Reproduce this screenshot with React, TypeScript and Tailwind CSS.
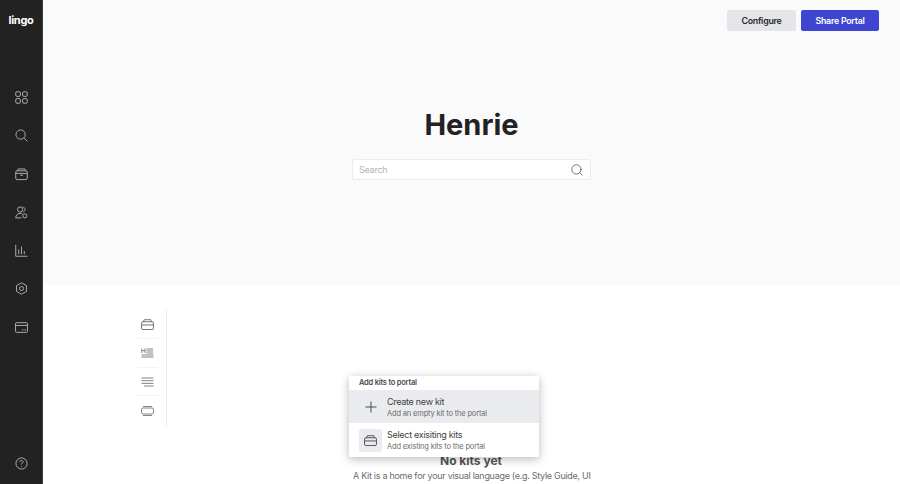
import { Search } from "lucide-react";

function NavIcon({ children }: { children: React.ReactNode }) {
  return (
    <svg viewBox="0 0 14 14" fill="none" stroke="#b4b4b4" strokeWidth="1" className="w-[13px] h-[13px] block">
      {children}
    </svg>
  );
}

function KitIcon({ className, color = "#4a4a4a" }: { className: string; color?: string }) {
  return (
    <svg viewBox="0 0 14 12" fill="none" stroke={color} strokeWidth="1" className={className}>
      <rect x="0.5" y="3" width="13" height="8.5" rx="1.5" />
      <path d="M2.5 3 L3.5 0.8 H10.5 L11.5 3 M0.5 6.5 H13.5" />
    </svg>
  );
}

const navTop = [
  <NavIcon key="grid">
    <rect x="0.8" y="0.8" width="5" height="5" rx="1.4" />
    <rect x="8.2" y="0.8" width="5" height="5" rx="1.4" />
    <rect x="0.8" y="8.2" width="5" height="5" rx="1.4" />
    <rect x="8.2" y="8.2" width="5" height="5" rx="1.4" />
  </NavIcon>,
  <NavIcon key="search">
    <circle cx="6" cy="6" r="5" />
    <path d="M9.7 9.7 L13.4 13.4" />
  </NavIcon>,
  <NavIcon key="kit">
    <rect x="0.8" y="3" width="12.4" height="9.5" rx="1.5" />
    <path d="M2.5 3 L3.4 1 H10.6 L11.5 3 M0.8 5.8 H13.2 M5.4 7.8 H8.6" />
  </NavIcon>,
  <NavIcon key="people">
    <circle cx="5.5" cy="3.8" r="2.8" />
    <path d="M0.8 12.8 C0.8 9.8 2.8 8 5.5 8 C6.5 8 7.3 8.2 8 8.7 M0.8 12.8 H7 M8.2 1.2 C9.8 1.2 10.8 2.4 10.8 3.8 C10.8 5 10 6 9 6.4" />
    <circle cx="10.6" cy="10.6" r="2.2" />
  </NavIcon>,
  <NavIcon key="chart">
    <path d="M0.8 0.8 V13.2 H13.4 M4 11 V6 M7 11 V2.8 M10 11 V7.5" />
  </NavIcon>,
  <NavIcon key="gear">
    <path d="M7 0.8 L12.4 3.9 V10.1 L7 13.2 L1.6 10.1 V3.9 Z" strokeLinejoin="round" />
    <circle cx="7" cy="7" r="2.2" />
  </NavIcon>,
  <NavIcon key="billing">
    <rect x="0.6" y="1.8" width="12.8" height="10.4" rx="1" />
    <path d="M0.6 4.8 H13.4 M7.4 9.5 H9 M10 9.5 H11.6" />
  </NavIcon>,
];

function Sidebar() {
  return (
    <aside className="w-[43px] h-full shrink-0 bg-[#222222] border-r border-[#3a3a3a] flex flex-col items-center">
      <div className="mt-[10px] h-[20px] text-white text-[11px] leading-[20px] font-bold tracking-[-0.3px]">lingo</div>
      <nav className="mt-[61px] flex flex-col gap-[25.3px]">{navTop}</nav>
      <div className="mt-auto mb-[14px]">
        <NavIcon>
          <circle cx="7" cy="7" r="6" />
          <path d="M5.3 5.5 C5.3 4.4 6.1 3.8 7 3.8 C8 3.8 8.7 4.4 8.7 5.3 C8.7 6.5 7 6.6 7 8" />
          <path d="M7 9.6 V10.4" />
        </NavIcon>
      </div>
    </aside>
  );
}

function Rail() {
  return (
    <div className="w-[30px] h-[116px] border-r border-[#eeeeee] pr-[8px] flex flex-col">
      <div className="h-[29px] flex items-center justify-center border-b border-[#f3f3f3]">
        <KitIcon className="w-[13px] h-[11px]" color="#666666" />
      </div>
      <div className="h-[29px] flex items-center justify-center border-b border-[#f3f3f3]">
        <svg viewBox="0 0 13 10" fill="none" stroke="#666666" strokeWidth="0.8" className="w-[13px] h-[10px]">
          <path d="M0.8 0.5 V5 M4 0.5 V5 M0.8 2.7 H4 M5.5 1 H12 M5.5 3 H12 M5.5 5 H12 M0.5 7 H12.5 M0.5 9 H12.5" />
        </svg>
      </div>
      <div className="h-[28px] flex items-center justify-center border-b border-[#f3f3f3]">
        <svg viewBox="0 0 13 10" fill="none" stroke="#666666" strokeWidth="0.8" className="w-[13px] h-[10px]">
          <path d="M0.5 1 H12.5 M0.5 3.7 H12.5 M0.5 6.4 H12.5 M3 9 H12.5" />
        </svg>
      </div>
      <div className="h-[29px] flex items-center justify-center">
        <svg viewBox="0 0 13 10" fill="none" stroke="#666666" strokeWidth="0.8" className="w-[13px] h-[10px]">
          <rect x="0.5" y="2" width="12" height="6" rx="1.5" />
          <path d="M2 0.5 H11 M2 9.5 H11" />
        </svg>
      </div>
    </div>
  );
}

function AddKitMenu() {
  return (
    <div className="absolute left-[306px] top-[91px] w-[190px] h-[81px] bg-white rounded-[2px] shadow-[0_2px_10px_rgba(0,0,0,0.28)] z-10">
      <div className="h-[14px] pl-[10px] pt-[1px] text-[7.5px] leading-[12px] font-semibold tracking-[-0.22px] text-[#4b4b4b]">Add kits to portal</div>
      <div className="h-[33px] bg-[#e9ebee] flex items-center pl-[10px]">
        <div className="w-[23px] h-[23px] flex items-center justify-center">
          <svg viewBox="0 0 12 12" fill="none" stroke="#4a4a4a" strokeWidth="1" className="w-[12px] h-[12px]">
            <path d="M6 0.5 V11.5 M0.5 6 H11.5" />
          </svg>
        </div>
        <div className="ml-[5px] pt-[1px]">
          <div className="text-[9px] leading-[12px] tracking-[-0.29px] text-[#3f3f3f]">Create new kit</div>
          <div className="text-[7.5px] leading-[11px] tracking-[-0.17px] text-[#6d6d6d]">Add an empty kit to the portal</div>
        </div>
      </div>
      <div className="h-[34px] flex items-center pl-[10px]">
        <div className="w-[23px] h-[23px] rounded-[2px] bg-[#e9ebee] flex items-center justify-center">
          <KitIcon className="w-[13px] h-[11px]" />
        </div>
        <div className="ml-[5px] pt-[1px]">
          <div className="text-[9px] leading-[12px] tracking-[-0.29px] text-[#3f3f3f]">Select exisiting kits</div>
          <div className="text-[7.5px] leading-[11px] tracking-[-0.17px] text-[#6d6d6d]">Add existing kits to the portal</div>
        </div>
      </div>
    </div>
  );
}

export default function App() {
  return (
    <div className="w-[900px] h-[484px] overflow-hidden flex bg-white font-['Inter',sans-serif]">
      <Sidebar />
      <main className="flex-1 h-full flex flex-col">
        <header className="h-[285px] shrink-0 bg-[#fafafa] flex flex-col items-center relative">
          <div className="absolute top-[10px] right-[21px] flex gap-[5px]">
            <button className="w-[69px] h-[21px] rounded-[2px] bg-[#e3e5e8] text-[#2a2a2a] text-[8.8px] tracking-[-0.25px] font-semibold">Configure</button>
            <button className="w-[78px] h-[21px] rounded-[2px] bg-[#3f45d0] text-white text-[8.8px] tracking-[-0.25px] font-semibold">Share Portal</button>
          </div>
          <h1 className="mt-[105px] h-[40px] text-[29px] leading-[40px] font-bold text-[#222222]">Henrie</h1>
          <div className="mt-[14px] w-[239px] h-[21px] bg-white border border-[#ececec] rounded-[2px] flex items-center justify-between pl-[6px] pr-[6px]">
            <span className="text-[9px] tracking-[-0.25px] text-[#b3b3b3]">Search</span>
            <Search className="w-[14px] h-[14px] text-[#4a4a4a]" strokeWidth={1.3} />
          </div>
        </header>
        <section className="flex-1 relative overflow-hidden flex">
          <div className="ml-[94px] mt-[25px]">
            <Rail />
          </div>
          <AddKitMenu />
          <div className="absolute left-[305px] top-[168px] w-[246px] text-center">
            <div className="text-[12px] leading-[15px] font-bold text-[#555555]">No kits yet</div>
            <p className="mt-[1px] text-[9px] leading-[13px] tracking-[-0.29px] text-[#6b6b6b] whitespace-nowrap text-left pl-[5px]">
              A Kit is a home for your visual language (e.g. Style Guide, UI
            </p>
          </div>
        </section>
      </main>
    </div>
  );
}
